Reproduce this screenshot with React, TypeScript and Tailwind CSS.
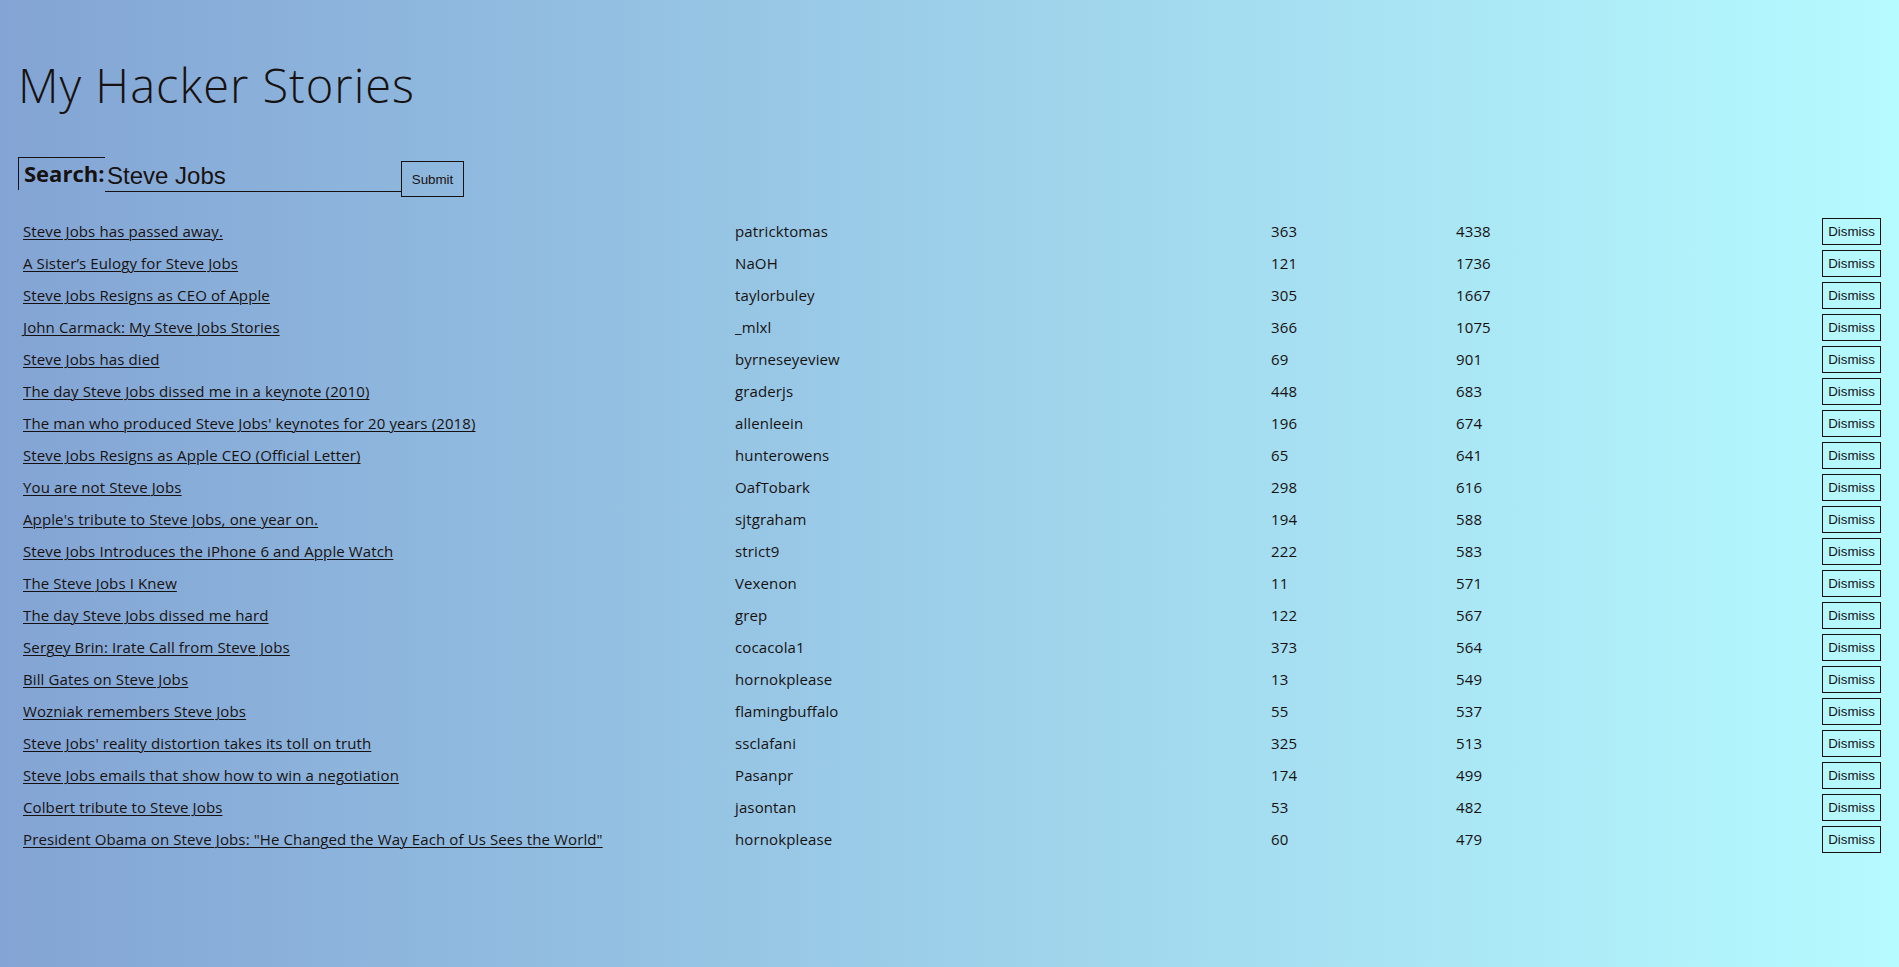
import React from "react";

type Story = { title: string; author: string; comments: number; points: number };

const stories: Story[] = [
  { title: "Steve Jobs has passed away.", author: "patricktomas", comments: 363, points: 4338 },
  { title: "A Sister\u2019s Eulogy for Steve Jobs", author: "NaOH", comments: 121, points: 1736 },
  { title: "Steve Jobs Resigns as CEO of Apple", author: "taylorbuley", comments: 305, points: 1667 },
  { title: "John Carmack: My Steve Jobs Stories", author: "_mlxl", comments: 366, points: 1075 },
  { title: "Steve Jobs has died", author: "byrneseyeview", comments: 69, points: 901 },
  { title: "The day Steve Jobs dissed me in a keynote (2010)", author: "graderjs", comments: 448, points: 683 },
  { title: "The man who produced Steve Jobs' keynotes for 20 years (2018)", author: "allenleein", comments: 196, points: 674 },
  { title: "Steve Jobs Resigns as Apple CEO (Official Letter)", author: "hunterowens", comments: 65, points: 641 },
  { title: "You are not Steve Jobs", author: "OafTobark", comments: 298, points: 616 },
  { title: "Apple's tribute to Steve Jobs, one year on.", author: "sjtgraham", comments: 194, points: 588 },
  { title: "Steve Jobs Introduces the iPhone 6 and Apple Watch", author: "strict9", comments: 222, points: 583 },
  { title: "The Steve Jobs I Knew", author: "Vexenon", comments: 11, points: 571 },
  { title: "The day Steve Jobs dissed me hard", author: "grep", comments: 122, points: 567 },
  { title: "Sergey Brin: Irate Call from Steve Jobs", author: "cocacola1", comments: 373, points: 564 },
  { title: "Bill Gates on Steve Jobs", author: "hornokplease", comments: 13, points: 549 },
  { title: "Wozniak remembers Steve Jobs", author: "flamingbuffalo", comments: 55, points: 537 },
  { title: "Steve Jobs' reality distortion takes its toll on truth", author: "ssclafani", comments: 325, points: 513 },
  { title: "Steve Jobs emails that show how to win a negotiation", author: "Pasanpr", comments: 174, points: 499 },
  { title: "Colbert tribute to Steve Jobs", author: "jasontan", comments: 53, points: 482 },
  { title: "President Obama on Steve Jobs: \"He Changed the Way Each of Us Sees the World\"", author: "hornokplease", comments: 60, points: 479 },
];

export default function App() {
  return (
    <div className="min-h-screen bg-[linear-gradient(to_right,#83a4d4,#b6fbff)] px-[18px] pt-[18px] pb-[18px] text-[#171212] font-['Open_Sans',sans-serif]">
      <h1 className="mt-[37px] text-[47px] leading-[60px] font-light tracking-[1px]">My Hacker Stories</h1>

      <form className="mt-[42px] flex items-start" onSubmit={(e) => e.preventDefault()}>
        <label
          htmlFor="search"
          className="box-border h-[33px] w-[87px] border-t border-l border-[#171212] pl-[5px] text-[22px] leading-[31px] font-bold"
        >
          Search:
        </label>
        <input
          id="search"
          type="text"
          defaultValue="Steve Jobs"
          className="mt-[4px] box-border h-[31px] w-[296px] border-0 border-b border-[#171212] bg-transparent px-[2px] py-[1px] font-['Liberation_Sans',Arial,sans-serif] text-[24px] text-[#171212] outline-none"
        />
        <button
          type="submit"
          className="mt-[4px] box-border h-[36px] w-[63px] border border-[#171212] bg-transparent font-['Liberation_Sans',Arial,sans-serif] text-[13.33px] leading-[15px] text-[#171212]"
        >
          Submit
        </button>
      </form>

      <ul className="mt-[21px] flex flex-col">
        {stories.map((s, i) => (
          <li key={i} className="grid grid-cols-[712px_536px_185px_1fr_auto] items-center pb-[5px] text-[15px] leading-[21px] tracking-[0.12px]">
            <span className="truncate px-[5px]">
              <a href="#" className="underline decoration-1 underline-offset-[2px]">
                {s.title}
              </a>
            </span>
            <span className="truncate px-[5px]">{s.author}</span>
            <span className="truncate px-[5px]">{s.comments}</span>
            <span className="truncate px-[5px]">{s.points}</span>
            <span className="flex justify-end">
              <button
                type="button"
                className="box-border h-[27px] w-[59px] border border-[#171212] bg-transparent font-['Liberation_Sans',Arial,sans-serif] text-[13.33px] leading-[15px] tracking-normal text-[#171212]"
              >
                Dismiss
              </button>
            </span>
          </li>
        ))}
      </ul>
    </div>
  );
}
